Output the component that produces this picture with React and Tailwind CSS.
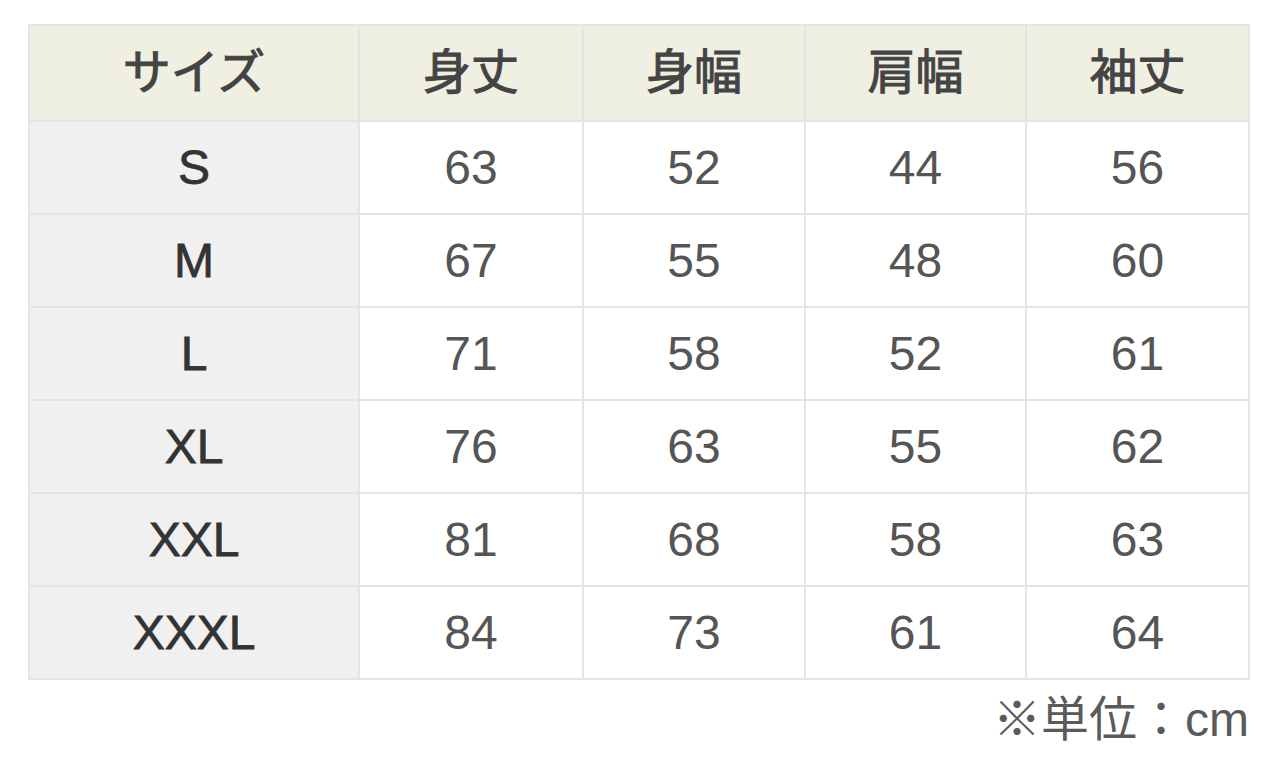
const headers = ["サイズ", "身丈", "身幅", "肩幅", "袖丈"];

const rows = [
  ["S", 63, 52, 44, 56],
  ["M", 67, 55, 48, 60],
  ["L", 71, 58, 52, 61],
  ["XL", 76, 63, 55, 62],
  ["XXL", 81, 68, 58, 63],
  ["XXXL", 84, 73, 61, 64],
];

const widths = ["w-[330px]", "w-[224px]", "w-[222px]", "w-[221px]", "w-[223px]"];

export default function App() {
  return (
    <div
      className="w-[1280px] h-[768px] bg-white pl-[28px] pt-[24px]"
      style={{ fontFamily: '"Liberation Sans", "Noto Sans CJK JP", sans-serif' }}
    >
      <table className="w-[1221px] border-collapse table-fixed">
        <thead>
          <tr className="h-[96px] bg-[#efefe2]">
            {headers.map((h, i) => (
              <th
                key={h}
                className={`${widths[i]} border-2 border-[#e4e4e4] text-[48px] font-normal text-[#444] text-center leading-none [-webkit-text-stroke:1px_#444]`}
              >
                {h}
              </th>
            ))}
          </tr>
        </thead>
        <tbody>
          {rows.map((r) => (
            <tr key={r[0]} className="h-[93px]">
              <td className="border-2 border-[#e4e4e4] bg-[#f0f0f0] text-center text-[48px] text-[#333] leading-none [-webkit-text-stroke:0.8px_#333]">
                {r[0]}
              </td>
              {r.slice(1).map((v, i) => (
                <td
                  key={i}
                  className="border-2 border-[#e4e4e4] bg-white text-center text-[48px] text-[#555] leading-none"
                >
                  {v}
                </td>
              ))}
            </tr>
          ))}
        </tbody>
      </table>
      <div className="w-[1221px] text-right text-[48px] text-[#5a5a5a] leading-none mt-[16px]">
        ※単位：cm
      </div>
    </div>
  );
}
